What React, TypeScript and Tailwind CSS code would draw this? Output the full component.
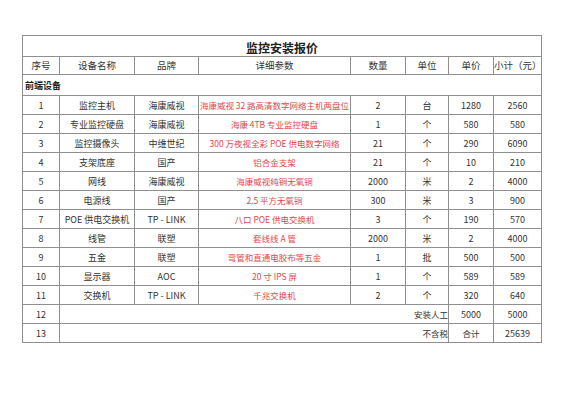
import React from "react";

type Item = {
  no: number;
  name: string;
  brand: string;
  spec: string;
  qty: string;
  unit: string;
  price: string;
  total: string;
};

const items: Item[] = [
  { no: 1, name: "监控主机", brand: "海康威视", spec: "海康威视 32 路高清数字网络主机两盘位", qty: "2", unit: "台", price: "1280", total: "2560" },
  { no: 2, name: "专业监控硬盘", brand: "海康威视", spec: "海康 4TB 专业监控硬盘", qty: "1", unit: "个", price: "580", total: "580" },
  { no: 3, name: "监控摄像头", brand: "中维世纪", spec: "300 万夜视全彩 POE 供电数字网络", qty: "21", unit: "个", price: "290", total: "6090" },
  { no: 4, name: "支架底座", brand: "国产", spec: "铝合金支架", qty: "21", unit: "个", price: "10", total: "210" },
  { no: 5, name: "网线", brand: "海康威视", spec: "海康威视纯铜无氧铜", qty: "2000", unit: "米", price: "2", total: "4000" },
  { no: 6, name: "电源线", brand: "国产", spec: "2.5 平方无氧铜", qty: "300", unit: "米", price: "3", total: "900" },
  { no: 7, name: "POE 供电交换机", brand: "TP - LINK", spec: "八口 POE 供电交换机", qty: "3", unit: "个", price: "190", total: "570" },
  { no: 8, name: "线管", brand: "联塑", spec: "套线线 A 管", qty: "2000", unit: "米", price: "2", total: "4000" },
  { no: 9, name: "五金", brand: "联塑", spec: "弯管和直通电胶布等五金", qty: "1", unit: "批", price: "500", total: "500" },
  { no: 10, name: "显示器", brand: "AOC", spec: "20 寸 IPS 屏", qty: "1", unit: "个", price: "589", total: "589" },
  { no: 11, name: "交换机", brand: "TP - LINK", spec: "千兆交换机", qty: "2", unit: "个", price: "320", total: "640" },
];

const cell = "border border-[#8f8f8f] text-center align-middle p-0 whitespace-nowrap overflow-hidden";

export default function App() {
  return (
    <div
      className="w-[565px] h-[400px] bg-white pt-[35px] pl-[22px] text-[#333] text-[9px] leading-none"
      style={{ fontFamily: '"Noto Sans CJK SC", "Noto Sans", sans-serif' }}
    >
      <table className="table-fixed border-collapse w-[519px] border border-[#8a8a8a]">
        <colgroup>
          <col className="w-[37px]" />
          <col className="w-[75px]" />
          <col className="w-[64px]" />
          <col className="w-[152px]" />
          <col className="w-[55px]" />
          <col className="w-[43px]" />
          <col className="w-[45px]" />
          <col className="w-[48px]" />
        </colgroup>
        <tbody>
          <tr className="h-[21px]">
            <td colSpan={8} className={`${cell} text-[12px] font-bold text-[#222] pt-[3px]`}>
              监控安装报价
            </td>
          </tr>
          <tr className="h-[18px] text-[9.5px]">
            <td className={cell}>序号</td>
            <td className={cell}>设备名称</td>
            <td className={cell}>品牌</td>
            <td className={cell}>详细参数</td>
            <td className={cell}>数量</td>
            <td className={cell}>单位</td>
            <td className={cell}>单价</td>
            <td className={cell}>小计（元）</td>
          </tr>
          <tr className="h-[21px]">
            <td colSpan={8} className={`${cell} text-left pl-[2px] font-bold text-[#222]`}>
              前端设备
            </td>
          </tr>
          {items.map((it) => (
            <tr key={it.no} className="h-[19px]">
              <td className={cell}>{it.no}</td>
              <td className={cell}>{it.name}</td>
              <td className={cell}>{it.brand}</td>
              <td className={`${cell} text-[#e0484d] text-[8.5px]`}>{it.spec}</td>
              <td className={cell}>{it.qty}</td>
              <td className={cell}>{it.unit}</td>
              <td className={cell}>{it.price}</td>
              <td className={cell}>{it.total}</td>
            </tr>
          ))}
          <tr className="h-[19px]">
            <td className={cell}>12</td>
            <td colSpan={5} className={`${cell} text-right text-[8.5px]`}>安装人工</td>
            <td className={cell}>5000</td>
            <td className={cell}>5000</td>
          </tr>
          <tr className="h-[19px]">
            <td className={cell}>13</td>
            <td colSpan={5} className={`${cell} text-right text-[8.5px]`}>不含税</td>
            <td className={`${cell} text-[8.5px]`}>合计</td>
            <td className={cell}>25639</td>
          </tr>
        </tbody>
      </table>
    </div>
  );
}
